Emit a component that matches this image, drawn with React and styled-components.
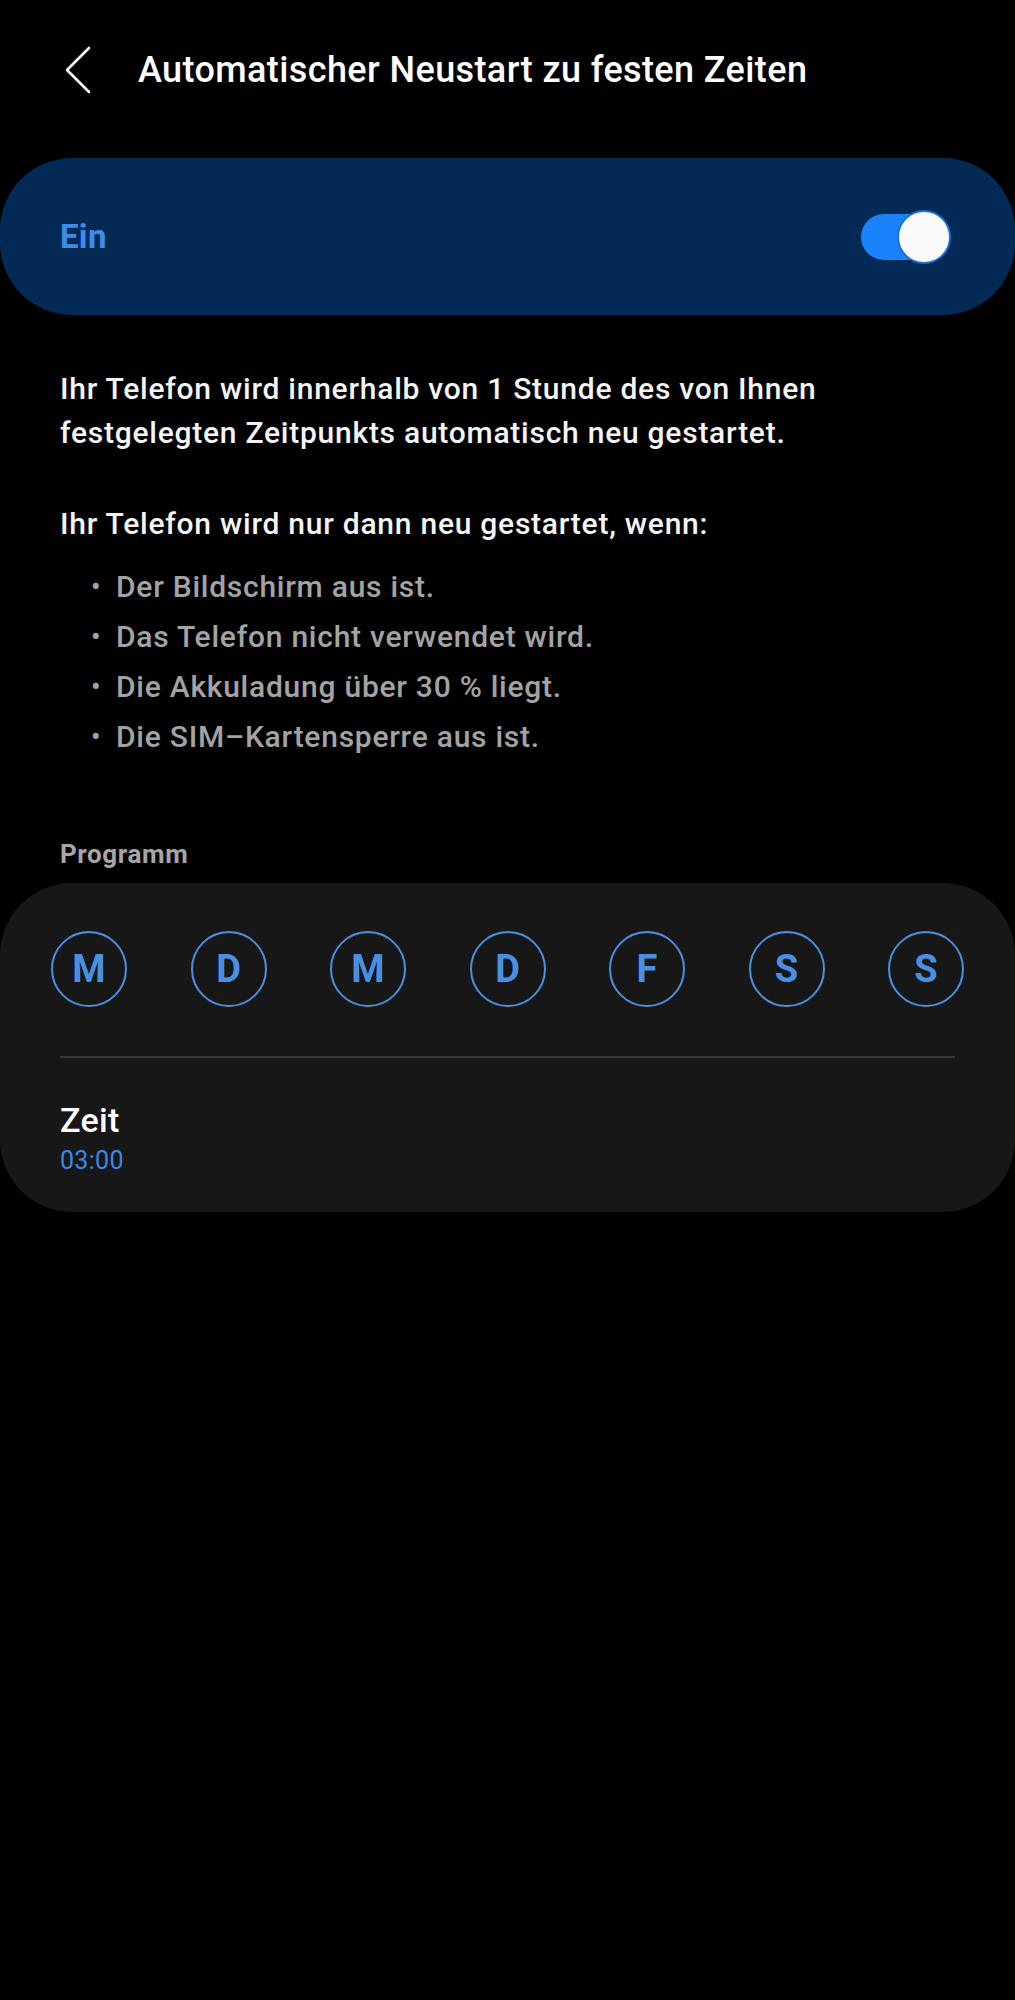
import React from "react";
import styled, { createGlobalStyle } from "styled-components";

const GlobalStyle = createGlobalStyle`
  body {
    margin: 0;
    background: #000;
    font-family: Roboto, "Noto Sans", "Liberation Sans", sans-serif;
    color: #f5f5f5;
  }
`;

const Page = styled.div`
  width: 1015px;
  min-height: 2000px;
  background: #000;
`;

const Header = styled.header`
  display: flex;
  align-items: center;
  height: 140px;
  padding-left: 62px;
`;

const BackButton = styled.button`
  display: flex;
  align-items: center;
  justify-content: center;
  width: 32px;
  height: 50px;
  padding: 0;
  margin-right: 44px;
  background: none;
  border: none;
  cursor: pointer;
`;

const Title = styled.h1`
  margin: 0;
  font-size: 36px;
  font-weight: 500;
  color: #fff;
  letter-spacing: 0.4px;
`;

const MasterCard = styled.div`
  display: flex;
  align-items: center;
  justify-content: space-between;
  height: 157px;
  margin-top: 18px;
  padding: 0 66px 0 60px;
  background: #022a55;
  border-radius: 72px;
`;

const MasterLabel = styled.span`
  font-size: 33px;
  font-weight: 700;
  color: #3d8cec;
  letter-spacing: 0.3px;
`;

const Track = styled.div`
  position: relative;
  width: 88px;
  height: 46px;
  border-radius: 23px;
  background: ${(p) => (p.$on ? "#1a83fc" : "#555")};
`;

const Thumb = styled.div`
  position: absolute;
  top: -4px;
  right: ${(p) => (p.$on ? "-2px" : "auto")};
  left: ${(p) => (p.$on ? "auto" : "-2px")};
  width: 50px;
  height: 50px;
  border-radius: 50%;
  background: #fafafa;
  border: 2.5px solid #1c6fd6;
`;

const Info = styled.section`
  padding: 52px 60px 0;
`;

const Paragraph = styled.p`
  margin: 0 0 ${(p) => p.$gap || 0}px;
  font-size: 30px;
  font-weight: 500;
  line-height: 44px;
  letter-spacing: 0.75px;
  color: #f4f4f4;
`;

const BulletList = styled.ul`
  list-style: none;
  margin: 16px 0 0;
  padding: 0 0 0 31px;
`;

const Bullet = styled.li`
  position: relative;
  padding-left: 25px;
  font-size: 30px;
  font-weight: 500;
  line-height: 50px;
  letter-spacing: 0.75px;
  color: #a3a3a3;

  &::before {
    content: "•";
    position: absolute;
    left: 0;
    font-size: 27px;
  }
`;

const SectionLabel = styled.h2`
  margin: 77px 0 14px;
  padding: 0 60px;
  font-size: 26px;
  font-weight: 700;
  line-height: 30px;
  letter-spacing: 0.6px;
  color: #a6a6a6;
`;

const ScheduleCard = styled.div`
  padding: 48px 0 36px;
  background: #171717;
  border-radius: 72px;
`;

const DayRow = styled.div`
  display: flex;
  justify-content: space-between;
  padding: 0 51px;
`;

const Day = styled.button`
  display: flex;
  align-items: center;
  justify-content: center;
  box-sizing: border-box;
  width: 76px;
  height: 76px;
  padding: 0;
  border-radius: 50%;
  border: 2.8px solid ${(p) => (p.$active ? "#4a90e2" : "#555")};
  background: transparent;
  font-family: inherit;
  font-size: 38px;
  font-weight: 700;
  color: ${(p) => (p.$active ? "#4a90e2" : "#888")};
`;

const Divider = styled.hr`
  margin: 49px 60px 0;
  border: none;
  height: 2px;
  background: #363636;
`;

const TimeRow = styled.div`
  display: flex;
  flex-direction: column;
  gap: 6px;
  padding: 42px 60px 0;
`;

const TimeLabel = styled.span`
  font-size: 34px;
  font-weight: 500;
  line-height: 40px;
  letter-spacing: 0.3px;
  color: #fff;
`;

const TimeValue = styled.span`
  font-size: 25px;
  line-height: 30px;
  letter-spacing: 0.3px;
  color: #3a88e8;
`;

const DAYS = ["M", "D", "M", "D", "F", "S", "S"];
const CONDITIONS = [
  "Der Bildschirm aus ist.",
  "Das Telefon nicht verwendet wird.",
  "Die Akkuladung über 30 % liegt.",
  "Die SIM–Kartensperre aus ist.",
];

function App() {
  return (
    <>
      <GlobalStyle />
      <Page>
        <Header>
          <BackButton aria-label="Zurück">
            <svg width="28" height="48" viewBox="0 0 28 48">
              <polyline
                points="25,2 3,24 25,46"
                fill="none"
                stroke="#fff"
                strokeWidth="2.6"
                strokeLinecap="round"
                strokeLinejoin="round"
              />
            </svg>
          </BackButton>
          <Title>Automatischer Neustart zu festen Zeiten</Title>
        </Header>

        <MasterCard>
          <MasterLabel>Ein</MasterLabel>
          <Track $on>
            <Thumb $on />
          </Track>
        </MasterCard>

        <Info>
          <Paragraph $gap={47}>
            Ihr Telefon wird innerhalb von 1 Stunde des von Ihnen festgelegten
            Zeitpunkts automatisch neu gestartet.
          </Paragraph>
          <Paragraph>Ihr Telefon wird nur dann neu gestartet, wenn:</Paragraph>
          <BulletList>
            {CONDITIONS.map((c) => (
              <Bullet key={c}>{c}</Bullet>
            ))}
          </BulletList>
        </Info>

        <SectionLabel>Programm</SectionLabel>
        <ScheduleCard>
          <DayRow>
            {DAYS.map((d, i) => (
              <Day key={i} $active>
                {d}
              </Day>
            ))}
          </DayRow>
          <Divider />
          <TimeRow>
            <TimeLabel>Zeit</TimeLabel>
            <TimeValue>03:00</TimeValue>
          </TimeRow>
        </ScheduleCard>
      </Page>
    </>
  );
}

export default App;
